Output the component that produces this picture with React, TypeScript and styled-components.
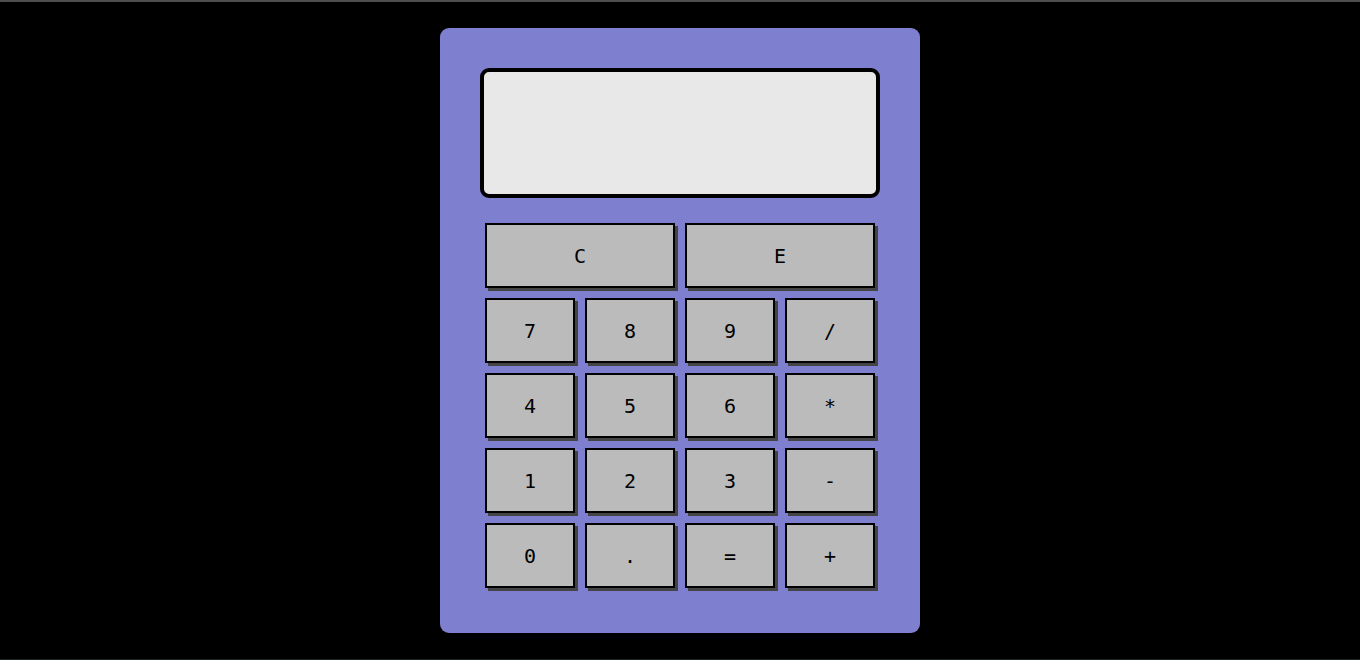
import React from 'react';
import styled, {createGlobalStyle} from 'styled-components';

const GlobalStyle = createGlobalStyle`
    html, body {
        margin: 0;
        padding: 0;
        background: #000;
    }
`;

const Page = styled.div`
    box-sizing: border-box;
    min-height: 100vh;
    display: flex;
    justify-content: center;
    align-items: flex-start;
    padding-top: 26px;
    border-top: 2px solid #4e4e4e;
    border-bottom: 1px solid #1c2626;
    font-family: "DejaVu Sans Mono", monospace;
`;

const Calculator = styled.div`
    box-sizing: border-box;
    width: 480px;
    padding: 40px 40px 45px;
    background: #7f7fd0;
    border-radius: 9px;
`;

const Display = styled.div`
    box-sizing: border-box;
    height: 130px;
    background: #e8e8e8;
    border: 4px solid #000;
    border-radius: 9px;
`;

const Keypad = styled.div`
    display: grid;
    grid-template-columns: repeat(4, 90px);
    grid-auto-rows: 65px;
    gap: 10px;
    margin: 25px 5px 0;
`;

const Key = styled.button<{$wide?: boolean}>`
    box-sizing: border-box;
    grid-column: ${(props) => (props.$wide ? 'span 2' : 'span 1')};
    display: flex;
    align-items: center;
    justify-content: center;
    padding: 0;
    background: #bbbbbb;
    border: 2px solid #000;
    border-radius: 0;
    box-shadow: 3px 3px 0 #444;
    font-family: "DejaVu Sans Mono", monospace;
    font-size: 20px;
    color: #000;
    cursor: pointer;
`;

const rows = [
    ['7', '8', '9', '/'],
    ['4', '5', '6', '*'],
    ['1', '2', '3', '-'],
    ['0', '.', '=', '+'],
];

const App = () => {
    return (
        <Page>
            <GlobalStyle />
            <Calculator>
                <Display />
                <Keypad>
                    <Key $wide>C</Key>
                    <Key $wide>E</Key>
                    {rows.flat().map((k) => (
                        <Key key={k}>{k}</Key>
                    ))}
                </Keypad>
            </Calculator>
        </Page>
    );
};

export default App;
